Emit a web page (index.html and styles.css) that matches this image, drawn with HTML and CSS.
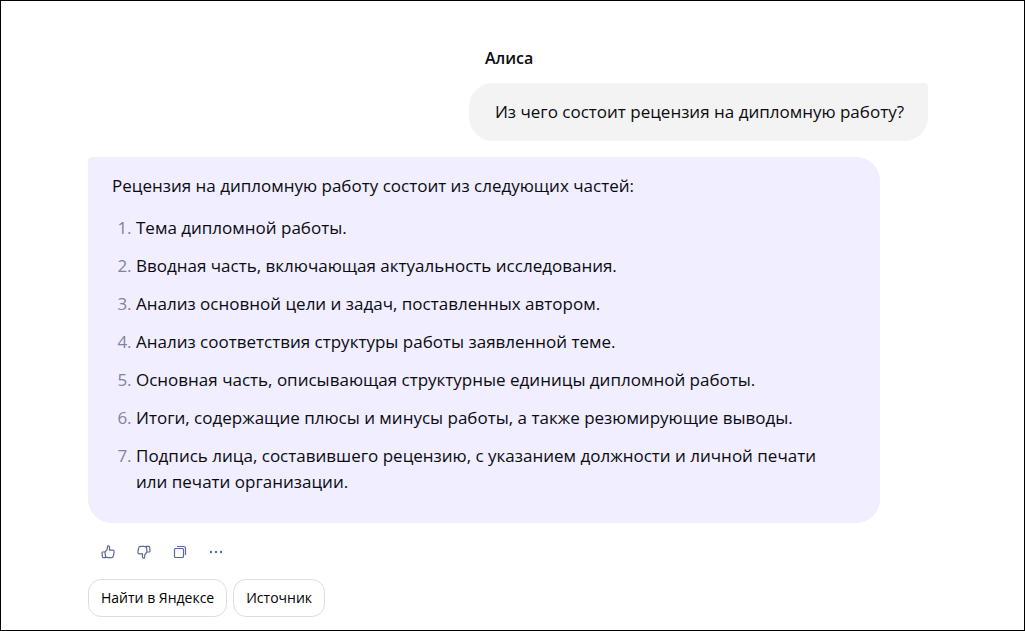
FILE: index.html
```html
<!DOCTYPE html>
<html lang="ru">
<head>
<meta charset="utf-8">
<meta name="viewport" content="width=device-width, initial-scale=1">
<title>Алиса</title>
<link rel="stylesheet" href="styles.css">
</head>
<body>
<main class="chat">
  <section class="question">
    <h1 class="name">Алиса</h1>
    <p class="bubble bubble-user">Из чего состоит рецензия на дипломную работу?</p>
  </section>
  <article class="bubble bubble-bot">
    <p class="intro">Рецензия на дипломную работу состоит из следующих частей:</p>
    <ol class="parts">
      <li>Тема дипломной работы.</li>
      <li>Вводная часть, включающая актуальность исследования.</li>
      <li>Анализ основной цели и задач, поставленных автором.</li>
      <li>Анализ соответствия структуры работы заявленной теме.</li>
      <li>Основная часть, описывающая структурные единицы дипломной работы.</li>
      <li>Итоги, содержащие плюсы и минусы работы, а также резюмирующие выводы.</li>
      <li>Подпись лица, составившего рецензию, с указанием должности и личной печати или печати организации.</li>
    </ol>
  </article>
  <div class="tools">
    <button class="tool" type="button" aria-label="Нравится">
      <svg class="icon" viewBox="0 0 16 16"><path d="M2.600 8H5l.6 5.600H3.200Q2.500 13.600 2.400 12.800L2 8.700Q2 8 2.600 8ZM5 8 7.200 5.300 7.500 2.500q.1-.8.8-.7Q9.700 2.100 9.600 3.800L9.400 6.200h3.200q1.700.1 1.500 1.700l-.7 3.900q-.3 1.800-2 1.800H8.200q-1.500 0-2.600-.9"/></svg>
    </button>
    <button class="tool" type="button" aria-label="Не нравится">
      <svg class="icon" viewBox="0 0 16 16"><path d="M13.400 8H11l-.6-5.600h2.400q.7 0 .8.8l.4 4.100q0 .7-.6.7ZM11 8l-2.200 2.700-.3 2.800q-.1.800-.8.700-1.400-.3-1.300-2l.2-2.400H3.400Q1.700 9.700 1.900 8.100l.7-3.900q.3-1.800 2-1.800h3.200q1.500 0 2.600.9"/></svg>
    </button>
    <button class="tool" type="button" aria-label="Копировать">
      <svg class="icon" viewBox="0 0 16 16"><rect x="2.500" y="4.500" width="9" height="9" rx="1"/><path d="M5 2.500h6.500q2 0 2 2V11"/></svg>
    </button>
    <button class="tool" type="button" aria-label="Ещё">
      <svg class="icon icon-dots" viewBox="0 0 16 16"><circle cx="3" cy="8" r="1.200"/><circle cx="8" cy="8" r="1.200"/><circle cx="13" cy="8" r="1.200"/></svg>
    </button>
  </div>
  <div class="links">
    <button class="chip" type="button">Найти в Яндексе</button>
    <button class="chip" type="button">Источник</button>
  </div>
</main>
</body>
</html>
```
FILE: styles.css
```css
* {
  box-sizing: border-box;
}

body {
  margin: 0;
  background: #fff;
  color: #0b0b10;
  font-family: "Open Sans", "Noto Sans", sans-serif;
  font-size: 17px;
  line-height: 26px;
}

.chat {
  display: flex;
  flex-direction: column;
  min-height: 100vh;
  padding: 45px 96px 13px 87px;
  border: 1px solid #000;
}

.question {
  align-self: flex-end;
}

.name {
  margin: 0 0 13px;
  padding-left: 16px;
  font-size: 16px;
  font-weight: 600;
  line-height: 24px;
}

.bubble {
  margin: 0;
  padding: 16px 24px;
}

.bubble-user {
  padding: 16px 24px 16px 26px;
  border-radius: 24px 4px 24px 24px;
  background: #f3f3f3;
}

.bubble-bot {
  margin: 16px 48px 0 0;
  padding-bottom: 28px;
  border-radius: 4px 24px 24px 24px;
  background: #f0eeff;
}

.intro {
  margin: 0 0 16px;
}

.parts {
  display: grid;
  gap: 12px;
  margin: 0;
  padding: 0 24px;
}

.parts li::marker {
  color: #80849c;
}

.tools {
  display: flex;
  gap: 12px;
  padding: 17px 0 15px 8px;
}

.tool {
  display: grid;
  place-items: center;
  width: 24px;
  height: 24px;
  padding: 0;
  border: 0;
  background: none;
}

.icon {
  width: 16px;
  height: 16px;
  fill: none;
  stroke: #5c6a98;
  stroke-width: 1.2;
  stroke-linejoin: round;
}

.icon-dots {
  fill: #5c6a98;
  stroke: none;
}

.links {
  display: flex;
  gap: 6px;
}

.chip {
  height: 38px;
  padding: 0 12px;
  border: 1px solid #dedee2;
  border-radius: 13px;
  background: #fff;
  color: #000;
  font-family: inherit;
  font-size: 14px;
  font-weight: 500;
  line-height: 20px;
}
```
